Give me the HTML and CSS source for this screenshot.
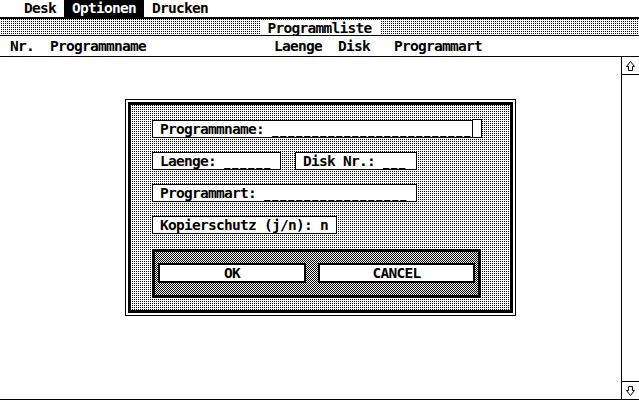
FILE: index.html
```html
<!DOCTYPE html>
<html lang="de">
<head>
    <meta charset="UTF-8">
    <title>Programmliste</title>
    <link rel="stylesheet" href="styles.css">
</head>
<body>
    <div class="menubar">
        <span class="menu-title">Desk</span><span class="menu-title active">Optionen</span><span class="menu-title">Drucken</span>
    </div>

    <div class="window">
        <div class="titlebar">
            <span class="title"> Programmliste </span>
        </div>
        <div class="header">Nr.  Programmname                Laenge  Disk   Programmart</div>
        <div class="work">
            <div class="list"></div>
            <div class="scrollbar">
                <div class="arrow up">
                    <svg width="11" height="12" viewBox="0 0 11 12"><polygon points="5.5,1.5 9.5,6.5 7.5,6.5 7.5,10.5 3.5,10.5 3.5,6.5 1.5,6.5" fill="#fff" stroke="#000" stroke-width="1"/></svg>
                </div>
                <div class="track"></div>
                <div class="arrow down">
                    <svg width="11" height="12" viewBox="0 0 11 12"><polygon points="5.5,10.5 9.5,5.5 7.5,5.5 7.5,1.5 3.5,1.5 3.5,5.5 1.5,5.5" fill="#fff" stroke="#000" stroke-width="1"/></svg>
                </div>
            </div>
        </div>
    </div>

    <!-- Eingabe-Dialog -->
    <div class="dialog">
        <div class="dialog-frame">
            <div class="row">
                <span class="field name">Programmname: <span class="blank">_________________________</span></span><span class="cursor"></span>
            </div>
            <div class="row">
                <span class="field laenge">Laenge: <span class="blank">______</span></span>
                <span class="field disk">Disk Nr.: <span class="blank">___</span></span>
            </div>
            <div class="row">
                <span class="field art">Programmart: <span class="blank">__________________</span></span>
            </div>
            <div class="row">
                <span class="field schutz">Kopierschutz (j/n): n</span>
            </div>
            <div class="buttons">
                <div class="button ok">OK</div>
                <div class="button cancel">CANCEL</div>
            </div>
        </div>
    </div>
</body>
</html>
```

FILE: styles.css
```css
* {
    box-sizing: border-box;
}

body {
    margin: 0;
    width: 639px;
    height: 401px;
    overflow: hidden;
    background: #fff;
    color: #000;
    font-family: "DejaVu Sans Mono", "Liberation Mono", monospace;
    font-weight: bold;
    font-size: 14.5px;
    letter-spacing: -0.73px;
    line-height: 16px;
    position: relative;
}

/* Menuezeile */
.menubar {
    height: 18px;
    padding-left: 16px;
    border-bottom: 1px solid #000;
    display: flex;
}

.menu-title {
    padding: 0 8px;
    height: 17px;
    line-height: 17px;
    white-space: pre;
}

.menu-title.active {
    background: #000;
    color: #fff;
}

/* Fenster */
.window {
    border-top: 1px solid #000;
}

.titlebar {
    height: 17px;
    border-bottom: 1px solid #000;
    background: conic-gradient(#000 0 25%, #fff 0) 0 0 / 2px 2px;
    display: flex;
    justify-content: center;
    align-items: flex-end;
}

.title {
    background: #fff;
    height: 14px;
    line-height: 14px;
    white-space: pre;
}

.header {
    height: 21px;
    padding: 2px 0 0 10px;
    border-bottom: 1px solid #000;
    white-space: pre;
}

.work {
    height: 343px;
    border-bottom: 1px solid #000;
    display: flex;
}

.list {
    flex: 1;
}

.scrollbar {
    width: 18px;
    border-left: 1px solid #000;
    display: flex;
    flex-direction: column;
}

.arrow {
    height: 18px;
    display: flex;
    align-items: center;
    justify-content: center;
}

.arrow.up {
    border-bottom: 1px solid #000;
}

.arrow.down {
    border-top: 1px solid #000;
}

.track {
    flex: 1;
}

/* Dialog liegt ueber dem Fenster */
.dialog {
    position: absolute;
    left: 125px;
    top: 99px;
    width: 391px;
    border: 1px solid #000;
    padding: 2px;
    background: #fff;
}

.dialog-frame {
    border: 3px solid #000;
    padding: 15px 0 12px 21px;
    background: conic-gradient(#000 0 25%, #fff 0) 0 0 / 2px 2px;
}

.row {
    display: flex;
    align-items: flex-start;
    gap: 14px;
    margin-bottom: 14px;
}

.row:nth-child(4) {
    margin-bottom: 15px;
}

.field {
    display: block;
    height: 18px;
    border: 1px solid #000;
    background: #fff;
    padding-left: 7px;
    white-space: pre;
    overflow: hidden;
}

/* Eingabestriche mit kleiner Luecke wie auf dem ST */
.blank {
    font-size: 10.5px;
    letter-spacing: 1.68px;
}

.field.name { width: 321px; }
.field.laenge { width: 129px; }
.field.disk { width: 122px; }
.field.art { width: 265px; }
.field.schutz { width: 185px; }

.cursor {
    width: 10px;
    height: 19px;
    margin: -1px 0 0 -15px;
    border: 1px solid #000;
    background: #fff;
}

.buttons {
    width: 329px;
    height: 49px;
    border: 3px solid #000;
    padding: 11px 3px 0;
    display: flex;
    gap: 12px;
    background: conic-gradient(#000 0 25%, #fff 0 50%, #000 0 75%, #fff 0) 0 0 / 2px 2px;
}

.button {
    height: 20px;
    border: 2px solid #000;
    background: #fff;
    text-align: center;
    line-height: 16px;
}

.button.ok { width: 148px; }
.button.cancel { width: 157px; }
```
